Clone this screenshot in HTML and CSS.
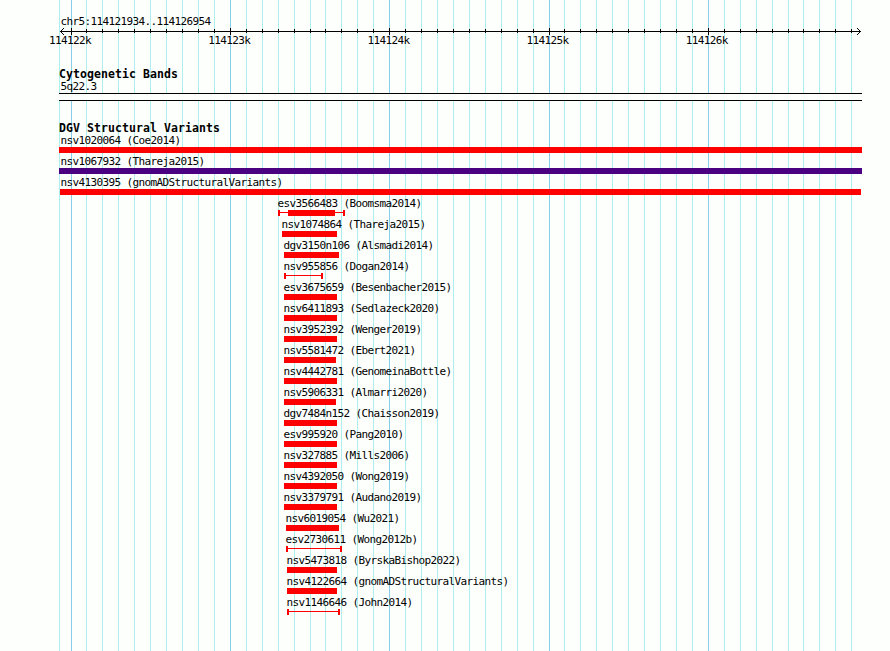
FILE: index.html
```html
<!DOCTYPE html>
<html lang="en">
<head>
    <meta charset="UTF-8">
    <title>chr5:114121934..114126954</title>
    <link rel="stylesheet" href="styles.css">
</head>
<body>
    <svg class="grid" width="890" height="651" shape-rendering="crispEdges">
        <path id="minor" class="minor"/>
        <path id="major" class="major"/>
    </svg>

    <div class="browser">
        <div class="position">chr5:114121934..114126954</div>
        <svg class="axis" width="890" height="7" shape-rendering="crispEdges">
            <path d="M60 3.5H861"/>
            <path id="ticks"/>
            <path class="arrow" d="M60 3h1v1h-1z M61 2h1v1h-1z M61 4h1v1h-1z M62 1h1v1h-1z M62 5h1v1h-1z M63 0h1v1h-1z M63 6h1v1h-1z"/>
            <path class="arrow" d="M860 3h1v1h-1z M859 2h1v1h-1z M859 4h1v1h-1z M858 1h1v1h-1z M858 5h1v1h-1z M857 0h1v1h-1z M857 6h1v1h-1z"/>
        </svg>
        <div class="scale">
            <span>114122k</span>
            <span>114123k</span>
            <span>114124k</span>
            <span>114125k</span>
            <span>114126k</span>
        </div>

        <div class="track cyto">
            <h2>Cytogenetic Bands</h2>
            <div class="label">5q22.3</div>
            <div class="band"></div>
        </div>

        <div class="track">
            <h2>DGV Structural Variants</h2>
            <div id="variants"></div>
        </div>
    </div>

    <script src="script.js"></script>
</body>
</html>
```

FILE: styles.css
```css
body {
    margin: 0;
    height: 651px;
    overflow: hidden;
    background-color: #fdfffc;
    color: #000;
    font-family: "DejaVu Sans Mono", monospace;
    font-size: 11px;
    line-height: 13px;
    letter-spacing: -0.62px;
    white-space: nowrap;
}

svg {
    display: block;
    fill: none;
}

.grid {
    position: absolute;
    top: 0;
    left: 0;
    z-index: -1;
}

.minor {
    stroke: #afeeee;
}

.major {
    stroke: #87ceeb;
}

.browser {
    padding-top: 15px;
}

.position {
    padding-left: 60.4px;
}

.axis {
    stroke: #000;
}

.axis .arrow {
    fill: #000;
    stroke: none;
}

.scale {
    display: flex;
    width: 796px;
    margin-top: -1px;
    padding-left: 49px;
}

.scale span {
    width: 159.25px;
}

.track {
    margin-left: 59px;
    width: 803px;
}

.cyto {
    margin-top: 21px;
    height: 54px;
}

h2 {
    margin: 0;
    height: 12px;
    font-size: 11.5px;
    font-weight: bold;
    letter-spacing: 0.08px;
}

.label {
    padding-left: 1.4px;
}

.band {
    box-sizing: border-box;
    height: 8px;
    border-top: 1px solid #000;
    border-bottom: 1px solid #000;
    background-color: #fdfffc;
}

.variant {
    height: 19px;
    margin-bottom: 2px;
}

.variant .name {
    height: 13px;
}

.bar {
    height: 6px;
    background-color: #f00;
}

.bar.complex {
    background-color: #4b0082;
}

/* uncertain ends: thin line with end caps, optional solid core */
.bar.range {
    box-sizing: border-box;
    border: solid #f00;
    border-width: 0 2px;
    background: linear-gradient(#f00, #f00) 0 2px / 100% 1px no-repeat;
}

.core {
    height: 6px;
    margin: 0 8px;
    background-color: #f00;
}
```

FILE: script.js
```js
// name, bar start, bar end, kind
var variants = [
    ["nsv1020064 (Coe2014)", 59, 862],
    ["nsv1067932 (Thareja2015)", 59, 862, "complex"],
    ["nsv4130395 (gnomADStructuralVariants)", 60, 861],
    ["esv3566483 (Boomsma2014)", 278, 345, "range", true],
    ["nsv1074864 (Thareja2015)", 282, 337],
    ["dgv3150n106 (Alsmadi2014)", 284, 339],
    ["nsv955856 (Dogan2014)", 284, 323, "range"],
    ["esv3675659 (Besenbacher2015)", 284, 337],
    ["nsv6411893 (Sedlazeck2020)", 284, 337],
    ["nsv3952392 (Wenger2019)", 284, 337],
    ["nsv5581472 (Ebert2021)", 284, 336],
    ["nsv4442781 (GenomeinaBottle)", 284, 337],
    ["nsv5906331 (Almarri2020)", 284, 336],
    ["dgv7484n152 (Chaisson2019)", 284, 337],
    ["esv995920 (Pang2010)", 284, 337],
    ["nsv327885 (Mills2006)", 284, 337],
    ["nsv4392050 (Wong2019)", 284, 337],
    ["nsv3379791 (Audano2019)", 284, 337],
    ["nsv6019054 (Wu2021)", 286, 339],
    ["esv2730611 (Wong2012b)", 286, 342, "range"],
    ["nsv5473818 (ByrskaBishop2022)", 287, 337],
    ["nsv4122664 (gnomADStructuralVariants)", 287, 337],
    ["nsv1146646 (John2014)", 287, 340, "range"]
];

var html = "";
variants.forEach(function (v) {
    var x = v[1] - 59;
    var nameX = Math.max(1, x - 1) + 0.4;
    html += '<div class="variant">' +
        '<div class="name" style="margin-left:' + nameX + 'px">' + v[0] + '</div>' +
        '<div class="bar ' + (v[3] || "") + '" style="margin-left:' + x + 'px;width:' + (v[2] - v[1]) + 'px">' +
        (v[4] ? '<div class="core"></div>' : '') +
        '</div></div>';
});
document.getElementById("variants").innerHTML = html;

// grid lines every 100 bp, heavier every 1000 bp
var major = [71, 230, 389, 549, 708];
var minor = [59, 86, 102, 118, 134, 150, 166, 182, 198, 214,
    246, 262, 278, 294, 310, 325, 341, 357, 373,
    405, 421, 437, 453, 469, 485, 501, 517, 533,
    564, 580, 596, 612, 628, 644, 660, 676, 692,
    724, 740, 756, 772, 788, 803, 819, 835, 851];

function lines(xs, y, h) {
    return xs.map(function (x) {
        return "M" + (x + 0.5) + " " + y + "v" + h;
    }).join("");
}

document.getElementById("minor").setAttribute("d", lines(minor, 0, 651));
document.getElementById("major").setAttribute("d", lines(major, 0, 651));
document.getElementById("ticks").setAttribute("d", lines(minor.slice(1), 1, 4) + lines(major, 0, 7));
```
